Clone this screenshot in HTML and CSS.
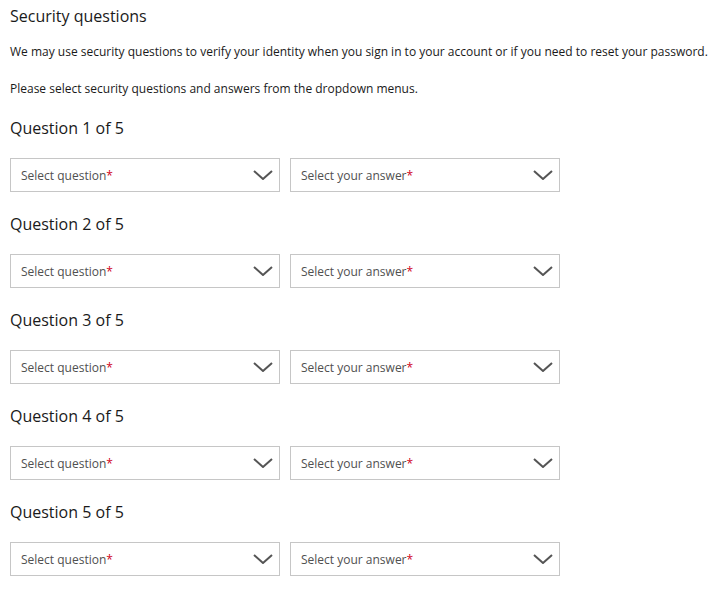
FILE: index.html
```html
<!DOCTYPE html>
<html>
<head>
<meta charset="utf-8">
<link rel="stylesheet" href="styles.css">
</head>
<body>
<div class="page">
  <h1 class="title">Security questions</h1>
  <p class="para">We may use security questions to verify your identity when you sign in to your account or if you need to reset your password.</p>
  <p class="para">Please select security questions and answers from the dropdown menus.</p>

  <section class="question">
    <h2 class="qhead">Question 1 of 5</h2>
    <div class="row">
      <div class="select"><span class="label">Select question<span class="req">*</span></span><svg class="chev" viewBox="0 0 20 10"><path d="M1 1 L10 9 L19 1"/></svg></div>
      <div class="select"><span class="label">Select your answer<span class="req">*</span></span><svg class="chev" viewBox="0 0 20 10"><path d="M1 1 L10 9 L19 1"/></svg></div>
    </div>
  </section>
  <section class="question">
    <h2 class="qhead">Question 2 of 5</h2>
    <div class="row">
      <div class="select"><span class="label">Select question<span class="req">*</span></span><svg class="chev" viewBox="0 0 20 10"><path d="M1 1 L10 9 L19 1"/></svg></div>
      <div class="select"><span class="label">Select your answer<span class="req">*</span></span><svg class="chev" viewBox="0 0 20 10"><path d="M1 1 L10 9 L19 1"/></svg></div>
    </div>
  </section>
  <section class="question">
    <h2 class="qhead">Question 3 of 5</h2>
    <div class="row">
      <div class="select"><span class="label">Select question<span class="req">*</span></span><svg class="chev" viewBox="0 0 20 10"><path d="M1 1 L10 9 L19 1"/></svg></div>
      <div class="select"><span class="label">Select your answer<span class="req">*</span></span><svg class="chev" viewBox="0 0 20 10"><path d="M1 1 L10 9 L19 1"/></svg></div>
    </div>
  </section>
  <section class="question">
    <h2 class="qhead">Question 4 of 5</h2>
    <div class="row">
      <div class="select"><span class="label">Select question<span class="req">*</span></span><svg class="chev" viewBox="0 0 20 10"><path d="M1 1 L10 9 L19 1"/></svg></div>
      <div class="select"><span class="label">Select your answer<span class="req">*</span></span><svg class="chev" viewBox="0 0 20 10"><path d="M1 1 L10 9 L19 1"/></svg></div>
    </div>
  </section>
  <section class="question">
    <h2 class="qhead">Question 5 of 5</h2>
    <div class="row">
      <div class="select"><span class="label">Select question<span class="req">*</span></span><svg class="chev" viewBox="0 0 20 10"><path d="M1 1 L10 9 L19 1"/></svg></div>
      <div class="select"><span class="label">Select your answer<span class="req">*</span></span><svg class="chev" viewBox="0 0 20 10"><path d="M1 1 L10 9 L19 1"/></svg></div>
    </div>
  </section>
</div>
</body>
</html>
```
FILE: styles.css
```css
* { box-sizing: border-box; }
html, body { margin: 0; padding: 0; background: #fff; }
body {
  font-family: "Open Sans", "Noto Sans", sans-serif;
  color: #1a1a1a;
}
.page {
  padding: 5px 0 0 10px;
}
.title {
  font-size: 16px;
  font-weight: 400;
  line-height: 22px;
  margin: 0 0 17px 0;
}
.para {
  font-size: 12px;
  line-height: 16px;
  margin: 0 0 21px 0;
  white-space: nowrap;
}
.qhead {
  font-size: 16px;
  font-weight: 400;
  line-height: 22px;
  margin: 0 0 19px 0;
}
.para + .question { margin-top: -1px; }
.question + .question { margin-top: 21px; }
.row {
  display: flex;
  gap: 10px;
}
.select {
  width: 270px;
  height: 34px;
  border: 1px solid #c6c6c6;
  display: flex;
  align-items: center;
  justify-content: space-between;
  padding: 0 6px 0 10px;
}
.label {
  font-size: 12px;
  color: #505050;
}
.req { color: #d0021b; }
.chev {
  width: 20px;
  height: 10px;
  fill: none;
  stroke: #555;
  stroke-width: 2;
}
```
